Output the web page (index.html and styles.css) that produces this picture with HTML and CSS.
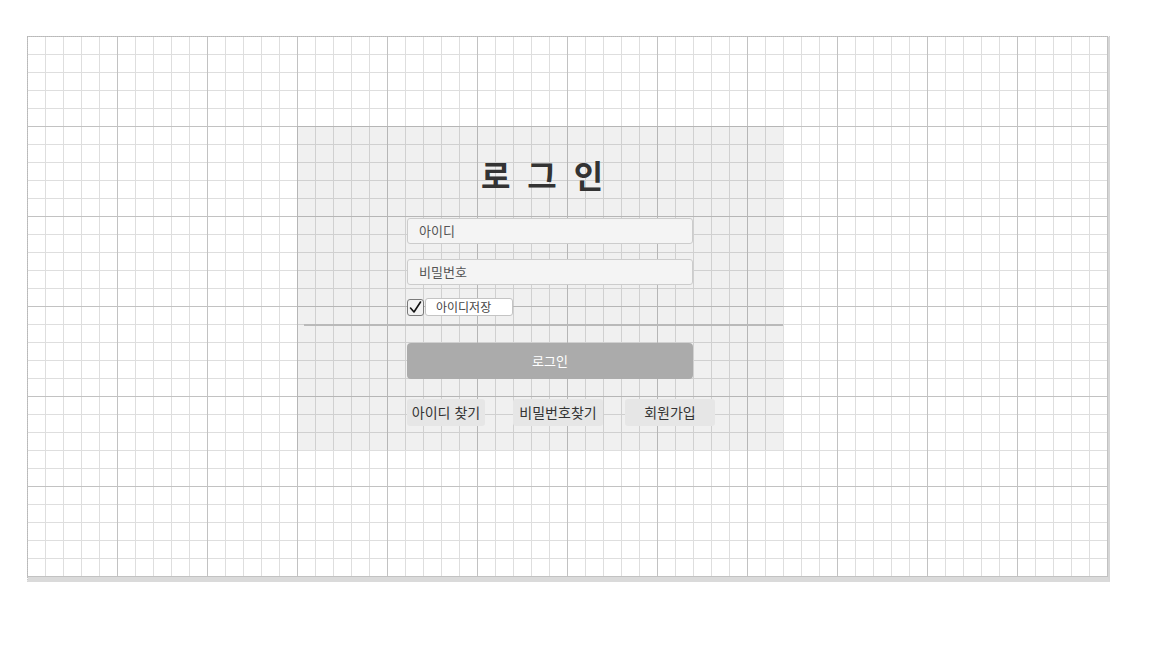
FILE: index.html
```html
<!DOCTYPE html>
<html lang="ko">
<head>
<meta charset="utf-8">
<title>로그인</title>
<link rel="stylesheet" href="styles.css">
</head>
<body>
<div class="sheet">
  <div class="panel">
    <h1 class="title">로 그 인</h1>
    <div class="form">
      <div class="field">아이디</div>
      <div class="field field-pw">비밀번호</div>
      <div class="remember">
        <span class="check"><svg width="15" height="15" viewBox="0 0 15 15"><path d="M2.5 8 L6 12 L12.5 2" fill="none" stroke="#111" stroke-width="1.6" stroke-linecap="round" stroke-linejoin="round"/></svg></span>
        <span class="remember-label">아이디저장</span>
      </div>
    </div>
    <div class="divider"></div>
    <div class="form">
      <div class="login-btn">로그인</div>
      <div class="links">
        <span class="link link-id">아이디 찾기</span>
        <span class="link link-pw">비밀번호찾기</span>
        <span class="link link-join">회원가입</span>
      </div>
    </div>
  </div>
</div>
</body>
</html>
```

FILE: styles.css
```css
html, body {
  margin: 0;
  padding: 0;
  background: #ffffff;
}

body {
  font-family: "Noto Sans CJK KR", "Noto Sans", sans-serif;
  color: #333333;
}

.sheet {
  margin: 36px 0 0 27px;
  width: 1080px;
  height: 451px;
  padding-top: 89px;
  box-sizing: content-box;
  border-top: 1px dotted #b8b8b8;
  border-left: 1px dotted #b8b8b8;
  border-right: 2px solid #d6d6d6;
  border-bottom: 5px solid #dadada;
  background-color: #ffffff;
  background-image:
    linear-gradient(to right, transparent 89px, #c2c2c2 89px),
    linear-gradient(to bottom, transparent 89px, #c2c2c2 89px),
    linear-gradient(to right, transparent 17px, #dedede 17px),
    linear-gradient(to bottom, transparent 17px, #dedede 17px);
  background-size: 90px 90px, 90px 90px, 18px 18px, 18px 18px;
  background-origin: padding-box;
}

.panel {
  margin-left: 269px;
  width: 486px;
  height: 324px;
  background: rgba(0, 0, 0, 0.06);
  display: flex;
  flex-direction: column;
}

.title {
  margin: 28px 0 24px 0;
  padding-left: 4px;
  height: 40px;
  line-height: 40px;
  font-size: 32px;
  font-weight: bold;
  text-align: center;
  word-spacing: 8px;
  color: #333333;
}

.form {
  padding-left: 110px;
  display: flex;
  flex-direction: column;
}

.field {
  width: 286px;
  height: 26px;
  box-sizing: border-box;
  border: 1px solid #cccccc;
  border-radius: 3px;
  background: #f4f4f4;
  padding-left: 11px;
  font-size: 13px;
  line-height: 24px;
  color: #555555;
}

.field-pw {
  margin-top: 15px;
}

.remember {
  margin-top: 13px;
  display: flex;
  align-items: center;
  height: 18px;
}

.check {
  width: 17px;
  height: 17px;
  box-sizing: border-box;
  border: 1px solid #7a7a7a;
  border-radius: 3px;
  background: #f2f2f2;
  display: flex;
  align-items: center;
  justify-content: center;
}

.remember-label {
  margin-left: 1px;
  width: 88px;
  height: 18px;
  box-sizing: border-box;
  border: 1px solid #c4c4c4;
  border-radius: 3px;
  background: #ffffff;
  padding-left: 10px;
  font-size: 12px;
  line-height: 16px;
  color: #444444;
}

.divider {
  margin: 8px 0 0 7px;
  height: 2px;
  background: #b9b9b9;
}

.login-btn {
  margin-top: 17px;
  width: 286px;
  height: 36px;
  border-radius: 4px;
  background: #ababab;
  color: #ffffff;
  font-size: 13px;
  line-height: 36px;
  text-align: center;
}

.links {
  margin-top: 20px;
  display: flex;
}

.link {
  height: 27px;
  line-height: 27px;
  border-radius: 3px;
  background: #e6e6e6;
  font-size: 14px;
  color: #333333;
  text-align: center;
}

.link-id {
  width: 78px;
}

.link-pw {
  width: 90px;
  margin-left: 28px;
}

.link-join {
  width: 90px;
  margin-left: 22px;
}
```
